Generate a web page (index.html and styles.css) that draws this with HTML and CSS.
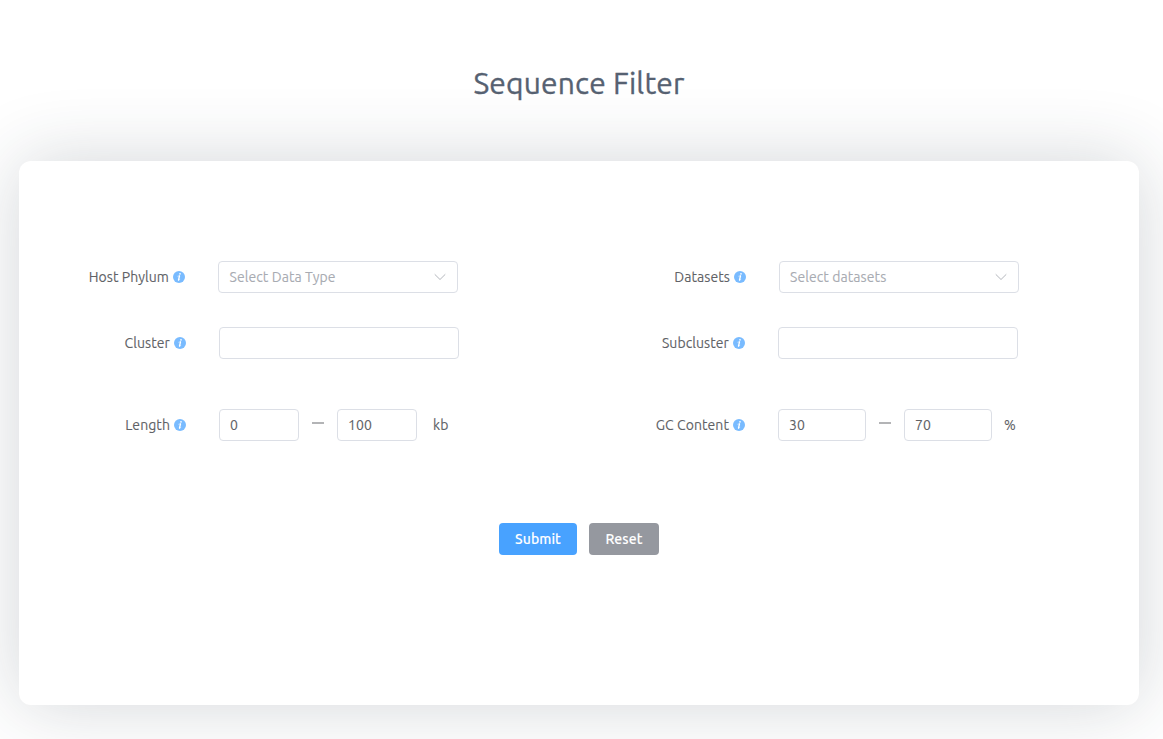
FILE: index.html
```html
<!DOCTYPE html>
<html lang="en">
<head>
<meta charset="utf-8">
<title>Sequence Filter</title>
<link rel="stylesheet" href="styles.css">
</head>
<body>
<svg class="defs" aria-hidden="true">
  <symbol id="info" viewBox="0 0 12 12">
    <circle cx="6" cy="6" r="6" fill="#79bbff"/>
    <circle cx="7" cy="2.8" r=".85" fill="#fff"/>
    <path d="M6.5 5L5.5 9" fill="none" stroke="#fff" stroke-width="1.3" stroke-linecap="round"/>
    <path d="M4.9 5.2L6.3 4.8M5.6 9.2L6.8 8.5" fill="none" stroke="#fff" stroke-width=".6" stroke-linecap="round"/>
  </symbol>
  <symbol id="chevron" viewBox="0 0 14 14">
    <path d="M2 4.6L7 9.5L12 4.6" fill="none" stroke="#b4b7bd" stroke-width="1" stroke-linecap="round" stroke-linejoin="round"/>
  </symbol>
</svg>
<h1 class="title">Sequence Filter</h1>
<main class="card">
  <div class="row">
    <div class="field host">
      <label class="label"><span>Host Phylum</span><svg class="info"><use href="#info"/></svg></label>
      <div class="box select"><span>Select Data Type</span><svg class="chevron"><use href="#chevron"/></svg></div>
    </div>
    <div class="field">
      <label class="label"><span>Datasets</span><svg class="info"><use href="#info"/></svg></label>
      <div class="box select"><span>Select datasets</span><svg class="chevron"><use href="#chevron"/></svg></div>
    </div>
  </div>
  <div class="row cluster-row">
    <div class="field">
      <label class="label"><span>Cluster</span><svg class="info"><use href="#info"/></svg></label>
      <div class="box"></div>
    </div>
    <div class="field">
      <label class="label"><span>Subcluster</span><svg class="info"><use href="#info"/></svg></label>
      <div class="box"></div>
    </div>
  </div>
  <div class="row range-row">
    <div class="field">
      <label class="label"><span>Length</span><svg class="info"><use href="#info"/></svg></label>
      <div class="box small">0</div>
      <span class="dash"></span>
      <div class="box small">100</div>
      <span class="unit kb">kb</span>
    </div>
    <div class="field">
      <label class="label"><span>GC Content</span><svg class="info"><use href="#info"/></svg></label>
      <div class="box medium">30</div>
      <span class="dash"></span>
      <div class="box medium">70</div>
      <span class="unit percent">%</span>
    </div>
  </div>
  <div class="actions">
    <button class="btn submit">Submit</button>
    <button class="btn reset">Reset</button>
  </div>
</main>
</body>
</html>
```
FILE: styles.css
```css
* { box-sizing: border-box; }
body {
  margin: 0;
  height: 739px;
  overflow: hidden;
  background: #fff;
  color: #606266;
  font: 400 14px/32px Ubuntu, "Noto Sans", sans-serif;
  letter-spacing: .08px;
  -webkit-text-stroke: .1px currentColor;
}
.defs { display: none; }
.title {
  height: 161px;
  margin: 0;
  padding: 63px 5px 0 0;
  text-align: center;
  color: #566171;
  font-size: 30px;
  font-weight: 400;
  letter-spacing: .18px;
  line-height: 40px;
  -webkit-text-stroke-width: .35px;
}
.card {
  width: 1120px;
  height: 544px;
  margin-left: 19px;
  padding-top: 100px;
  border-radius: 12px;
  background: #fff;
  box-shadow: 0 0 75px rgba(37, 50, 66, .2);
}
.row { display: flex; height: 32px; }
.cluster-row { margin-top: 34px; }
.range-row { margin-top: 50px; }
.field { display: flex; width: 559px; flex: none; }
.label {
  display: flex;
  align-items: center;
  justify-content: flex-end;
  width: 167px;
  margin-right: 33px;
  white-space: nowrap;
}
.host { width: 560px; }
.host .label { width: 166px; }
.info { width: 12px; height: 12px; margin-left: 4px; flex: none; }
.box {
  width: 240px;
  height: 32px;
  padding: 0 10px;
  border: 1px solid #dcdfe6;
  border-radius: 4px;
  line-height: 30px;
  white-space: nowrap;
}
.host .select { padding-left: 10.5px; }
.select {
  display: flex;
  align-items: center;
  justify-content: space-between;
  color: #a8abb2;
}
.chevron { width: 14px; height: 14px; }
.small { width: 80px; }
.medium { width: 88px; }
.dash { width: 12px; height: 2px; margin: 13px 13px 0; background: #b3b4b6; }
.kb { margin-left: 16px; }
.percent { margin-left: 12px; }
.actions { display: flex; gap: 12px; margin: 82px 0 0 480px; }
.btn {
  height: 32px;
  padding: 0;
  border: 0;
  border-radius: 4px;
  color: #fff;
  font: 500 14px/32px Ubuntu, "Noto Sans", sans-serif;
  letter-spacing: .08px;
}
.submit { width: 78px; background: #48a2ff; }
.reset { width: 70px; background: #95989f; }
```
